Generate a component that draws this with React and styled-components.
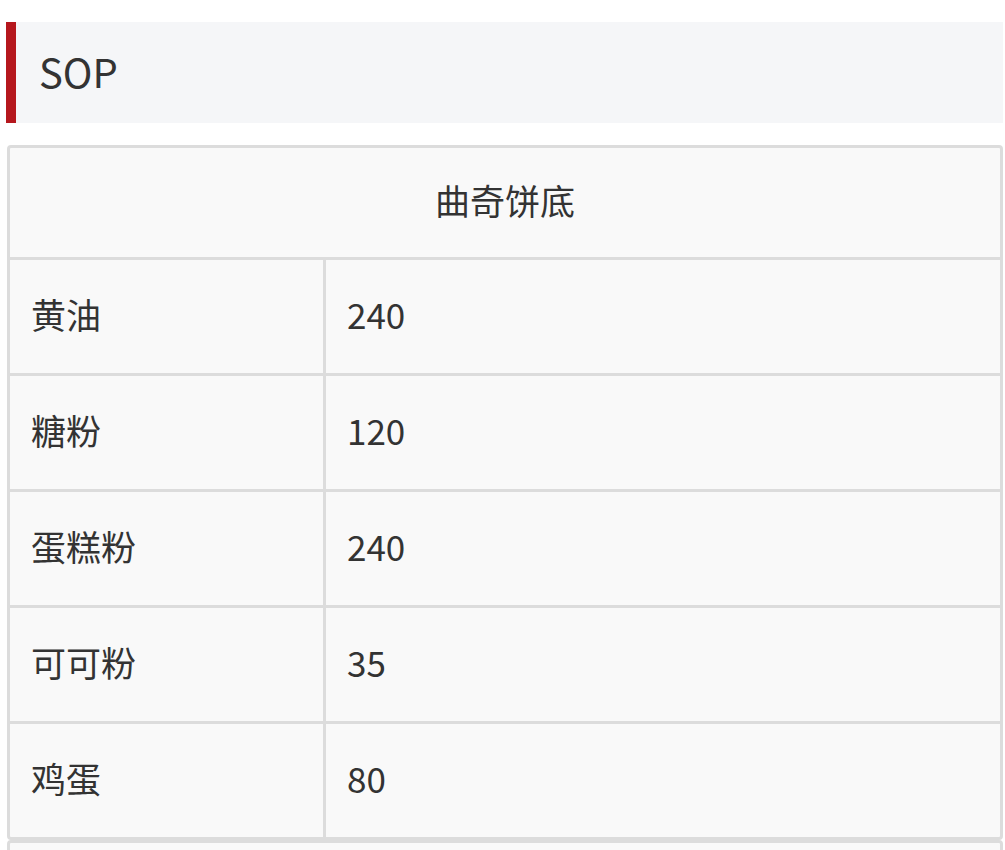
import React from 'react'
import styled, { createGlobalStyle } from 'styled-components'

const Global = createGlobalStyle`
  body {
    margin: 0;
    background: #ffffff;
    font-family: "Noto Sans CJK SC", "Noto Sans", sans-serif;
    color: #333333;
  }
`;

const Page = styled.div`
  padding: 22px 2px 0 6px;
`;

const Heading = styled.div`
  height: 101px;
  display: flex;
  align-items: center;
  background: #f5f6f8;
  border-left: 10px solid #b5171d;
  padding-left: 23px;
  padding-bottom: 4px;
  box-sizing: border-box;
  font-size: 40px;
  color: #333333;
`;

const Table = styled.div`
  margin: ${props => props.top}px 0 0 1px;
  border: 3px solid #dcdcdc;
  border-radius: 4px;
  background: #f9f9f9;
`;

const HeadCell = styled.div`
  height: 112px;
  box-sizing: border-box;
  padding-bottom: 6px;
  display: flex;
  align-items: center;
  justify-content: center;
  font-size: 35px;
  border-bottom: 3px solid #dcdcdc;
`;

const Row = styled.div`
  display: grid;
  grid-template-columns: 316px 1fr;
  height: 113px;
  border-bottom: 3px solid #dcdcdc;

  &:last-child {
    border-bottom: none;
  }
`;

const Cell = styled.div`
  display: flex;
  align-items: center;
  padding: 0 0 6px 21px;
  font-size: 35px;
  border-right: ${props => props.first ? '3px solid #dcdcdc' : 'none'};
`;

const rows = [
  ['黄油', '240'],
  ['糖粉', '120'],
  ['蛋糕粉', '240'],
  ['可可粉', '35'],
  ['鸡蛋', '80'],
];

const App = () => {
  return (
    <Page>
      <Global />
      <Heading>SOP</Heading>
      <Table top={22}>
        <HeadCell>曲奇饼底</HeadCell>
        {rows.map(([name, qty]) => (
          <Row key={name}>
            <Cell first>{name}</Cell>
            <Cell>{qty}</Cell>
          </Row>
        ))}
      </Table>
      <Table top={0}>
        <HeadCell>芝士糊</HeadCell>
      </Table>
    </Page>
  )
}

export default App
